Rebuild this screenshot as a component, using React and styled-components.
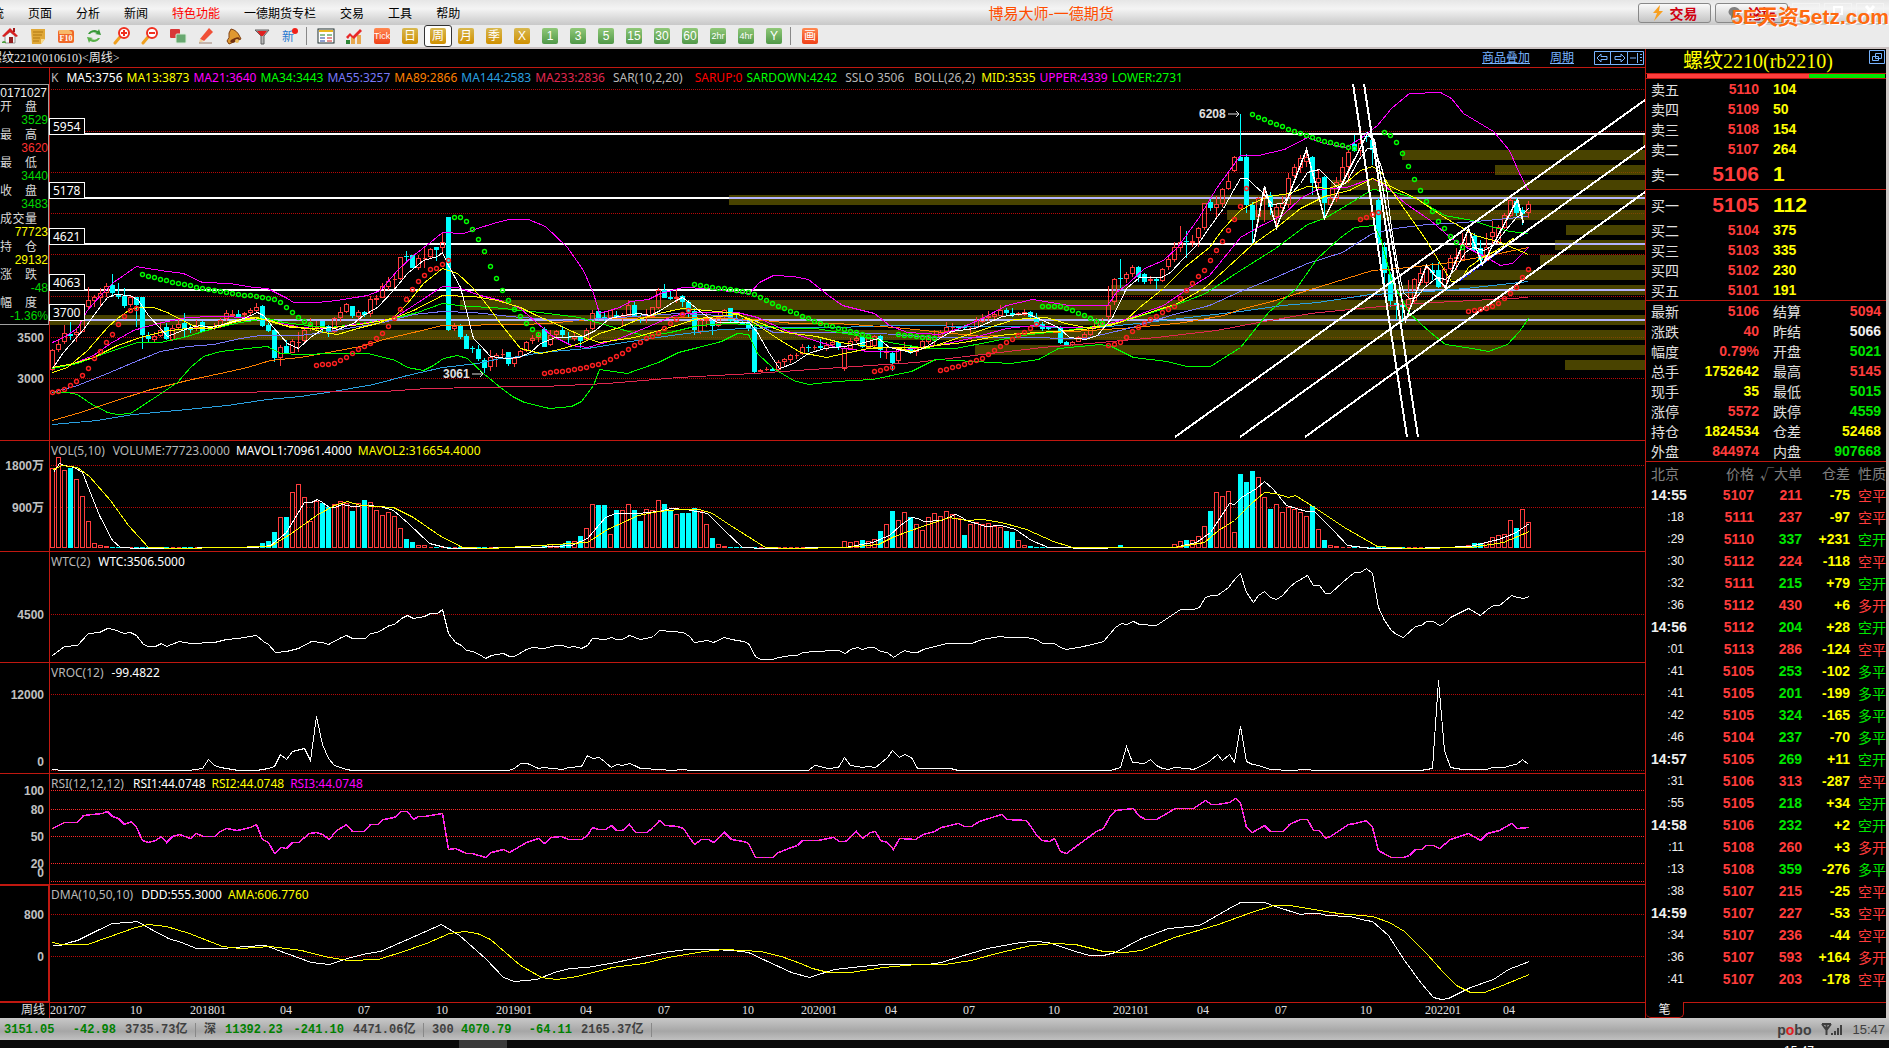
import React from 'react';
import styled, { createGlobalStyle, css } from 'styled-components';

const GlobalStyle = createGlobalStyle`
  * { box-sizing: border-box; }
  body {
    margin: 0;
    background: #000;
    font-family: "Liberation Sans", "Noto Sans CJK SC", sans-serif;
    font-size: 12px;
    overflow: hidden;
  }
  button, table { font: inherit; }
`;

const RED = '#ff3c3c';
const GREEN = '#00e600';
const YELLOW = '#ffff00';
const WHITE = '#f0f0f0';
const LINE = '#c01810';

/* ---------- data ---------- */

const menus = ['系统', '页面', '分析', '新闻', '特色功能', '一德期货专栏', '交易', '工具', '帮助'];

// one entry per week: colour, high, body top, body bottom, low
const candles = `
r349,350,370,371 r340,344,350,352 r325,333,342,344 c322,334,336,340 r328,332,335,342 r310,314,332,332
r287,300,307,310 r295,297,301,307 r288,293,298,307 r283,286,293,297 c274,285,293,297 c283,295,297,299
c288,296,306,308 r295,297,305,307 c297,297,305,327 c297,297,335,349 c332,336,339,342 r332,336,340,343
r322,330,336,337 c323,327,339,340 r325,328,340,341 r320,324,328,330 c313,323,329,337 c325,328,330,333
r320,327,329,331 c321,322,332,332 r326,327,328,330 r323,326,327,330 r318,320,327,328 r310,313,319,321
r310,314,316,317 c310,314,317,318 r312,313,315,317 r308,310,313,315 r303,307,311,313 c305,306,326,327
c323,325,331,332 c328,330,358,362 r345,347,358,366 c340,346,353,354 r339,341,353,353 r332,342,343,352
r328,330,341,342 r318,324,329,331 r321,327,328,331 c321,321,327,332 c325,326,332,337 r317,318,332,333
r307,312,318,322 r303,304,312,313 c306,306,316,318 r310,312,317,321 c311,312,315,317 r296,299,314,317
r295,298,300,305 r283,286,298,298 r277,281,287,290 r273,279,280,289 r257,257,279,280 c251,256,257,263
c255,255,268,268 r255,258,268,270 r248,258,259,268 r248,249,257,258 c247,247,250,261 r232,242,248,252
c217,217,330,331 r323,326,329,331 c324,325,337,339 c334,336,349,349 c346,348,349,353 c345,349,359,361
c358,360,368,373 r350,357,367,371 r353,355,358,367 r349,354,355,359 c352,352,364,366 r357,358,364,367
r350,351,357,358 r341,342,351,352 r335,338,341,344 r333,335,338,342 c327,329,347,347 r330,335,345,346
r330,331,335,337 c327,330,335,337 c332,337,338,343 r333,336,339,341 c336,336,341,348 r328,330,340,340
r310,313,329,330 c308,311,318,320 c312,317,318,321 r310,310,318,319 c311,315,317,319 r313,316,317,326
r300,305,316,317 c302,305,317,317 c315,317,318,323 r309,316,317,323 r307,307,317,318 r288,290,308,309
c284,290,298,298 c291,297,299,300 r290,297,299,303 c295,296,302,307 c300,302,312,318 c308,311,330,335
r319,320,332,334 r313,319,321,327 c318,321,326,335 r313,317,326,327 r309,310,317,318 c308,308,321,323
c312,321,323,324 c318,322,325,325 c318,323,328,331 c325,327,372,373 r369,370,372,372 r367,369,370,371
c367,369,371,371 r360,362,370,372 r358,359,362,367 r354,355,360,363 r353,355,356,359 r344,347,354,355
c345,347,348,352 r345,347,348,350 c339,346,348,350 r342,345,349,351 r340,342,345,347 c341,342,348,350
r346,348,369,371 r338,341,349,350 r336,338,341,343 c336,337,347,348 r337,338,348,348 r335,336,346,347
c335,336,350,358 r347,351,353,359 c352,353,363,371 r347,348,361,363 r342,347,348,350 c345,347,353,354
r347,348,352,356 r339,341,348,349 r335,339,342,344 r330,337,340,345 r330,332,337,338 r322,327,332,333
r323,327,328,333 c326,327,328,330 c325,326,328,330 r326,328,329,335 r317,320,328,328 r314,318,322,323
r311,316,318,321 r313,314,317,320 r305,310,316,316 c308,310,313,315 c308,313,315,317 r312,313,315,316
r309,312,315,316 c311,312,317,319 c313,317,325,326 c322,324,329,331 c326,327,329,330 r325,326,327,328
c326,327,343,344 c341,342,345,345 r341,342,345,346 r336,337,342,342 r332,334,338,339 r327,328,335,336
r318,323,328,328 r318,323,325,330 r286,305,317,320 r278,279,302,305 c259,278,279,288 r272,274,279,283
r265,267,274,277 c266,267,277,282 c273,274,282,284 r276,279,281,284 c277,279,281,289 r268,269,281,282
r255,259,267,270 r242,247,260,262 r226,242,248,252 c231,241,242,258 r235,241,243,247 r227,228,238,247
r203,203,228,230 c198,202,208,211 r196,204,208,217 r188,189,204,207 r173,181,189,190 r156,157,171,172
c114,157,161,161 c154,157,205,213 c202,205,220,243 r197,198,217,223 r187,197,198,222 c192,195,207,215
r203,207,217,225 r196,203,208,212 r173,178,205,208 r164,167,176,178 r155,158,168,173 r149,157,162,167
c156,157,183,195 r170,178,183,189 c176,177,203,219 r188,198,205,208 r177,182,199,202 r157,167,182,185
r149,152,167,183 c135,144,151,152 r133,143,151,156 c132,136,137,142 c138,140,150,165 c198,200,243,247
c242,247,273,283 c272,274,301,307 c297,303,305,320 c303,305,307,322 r280,299,308,310 r278,279,301,303
r268,273,283,285 r265,268,283,285 c263,270,273,280 c262,270,287,288 r267,269,287,288 r255,258,269,270
r248,257,259,270 r233,243,260,260 r228,232,247,247 c233,236,250,252 c240,248,260,264 r233,247,261,261
r221,232,237,247 r225,227,243,244 r213,215,228,229 r198,200,216,217 c198,201,213,216 c207,210,214,225
r201,204,213,218`.trim().split(/\s+/).map((s) => ({ up: s[0] === 'r', v: s.slice(1).split(',').map(Number) }));

// busy stretches of the volume chart, the weeks between them are nearly flat
const volumeRuns = [
  [0, 'r468 r457 r470 c468 r479 r496 r521 r543 r545 r546'],
  [35, 'c543 c541 c532 r517 c517 r492 r484 r497 r521 r501 c503 c507 r504 r501 r503 c511 r503 c500 r502 r510 r515 r512 r516 r528 c539 c542 r545 r545'],
  [82, 'c545 r544 r546 c544 c541 r541 c536 r528 r504 c505 c505 r534 c510 r510 r504 c510 c521 r509 r510 r500 c504 c511 r514 c513 c513 c508 r511 r524 c538 r544 r546'],
  [132, 'r541 r542 r541 c540 r541 r539 c531 r524 c511 r520 r512 c517 r524 r530 r517 r513 r516 r511 r514 r518 c535 r524 r522 r524 r523 r526 r527 c531 c532 r540 r545 c546'],
  [178, 'c545'],
  [187, 'r544 r541 c540 r540 r536 r526 c511 r492 r496 r491 r532 c474 c482 c471 r477 r497 c509 r504 r512 r507 r509 r512 r516 c506 r529 c540 r545 r546'],
  [236, 'r545 c543 c543 r542 r537 r535 r534 r520 c528 r509 r522'],
];

const volumes = candles.map((c) => ({ up: c.up, top: 547 }));
volumeRuns.forEach(([start, run]) => run.split(' ').forEach((s, i) => {
  volumes[start + i] = { up: s[0] === 'r', top: Number(s.slice(1)) };
}));

const priceLines = [
  ['#2aa0e0', '52,424 97,420 133,414 187,409 227,405 267,399 300,396 333,391 373,384 407,375 442,367 477,363 500,358 520,356 540,352 587,348 630,341 678,334 721,329 777,327 836,327 895,325 994,326 1100,327 1146,322 1188,317 1240,311 1282,305 1317,302 1370,294 1416,292 1465,288 1528,281'],
  ['#e02850', '52,392 83,392 213,392 300,391 383,391 427,388 480,387 520,386 543,386 607,383 678,377 753,373 840,367 915,362 982,354 1042,347 1100,342 1156,337 1216,330 1258,322 1310,313 1370,307 1416,303 1528,297'],
  ['#ff8000', '52,420 80,412 113,401 147,390 187,380 220,373 247,367 270,360 300,357 333,351 360,346 387,338 413,332 442,325 520,324 547,323 599,318 678,317 753,319 793,323 836,323 895,327 943,332 982,336 1026,333 1073,331 1135,327 1184,322 1223,315 1240,309 1275,300 1307,290 1346,278 1372,270 1409,267 1451,262 1489,255 1528,247'],
  ['#7878f8', '52,392 77,385 107,373 133,362 160,351 187,346 213,344 240,338 260,335 300,335 323,332 353,327 383,322 413,314 442,311 473,312 520,317 571,320 619,317 678,313 721,315 753,322 773,332 836,332 880,333 935,337 1014,337 1085,338 1132,327 1170,315 1209,305 1240,291 1275,277 1307,263 1342,252 1372,233 1395,228 1426,224 1451,223 1486,220 1528,216'],
  ['#00ff00', '52,368 77,363 107,352 137,342 160,342 183,337 213,328 240,322 267,318 283,322 307,325 330,327 360,323 393,318 417,312 442,303 467,306 493,307 540,312 579,317 607,325 646,336 670,332 698,325 729,323 761,325 785,328 816,328 856,335 895,343 927,348 955,348 986,342 1022,335 1065,330 1114,323 1142,315 1174,305 1205,293 1240,270 1275,248 1307,224 1324,218 1346,205 1372,189 1391,191 1416,198 1444,215 1472,220 1493,227 1510,231 1528,233'],
  ['#ff00ff', '52,367 73,363 93,355 110,343 133,330 150,325 167,321 187,317 213,316 253,317 277,322 300,327 317,328 333,327 363,323 393,318 410,307 442,286 457,287 480,295 500,300 520,308 551,335 571,345 587,347 619,338 646,327 674,315 698,312 737,312 757,317 785,330 808,338 836,347 868,351 895,351 919,347 947,343 974,337 1006,328 1034,325 1065,327 1093,327 1128,318 1163,305 1188,288 1209,275 1223,258 1240,237 1261,225 1282,215 1300,198 1317,189 1346,187 1372,178 1384,185 1405,203 1430,220 1451,238 1468,248 1486,257 1500,265 1512,263 1528,247'],
  ['#ffff00', '52,372 67,367 87,350 107,327 117,318 128,310 137,307 153,307 167,312 190,324 200,327 220,325 233,320 253,317 273,321 290,327 310,328 323,332 337,334 357,328 377,323 393,317 407,303 423,283 442,268 457,273 472,287 487,305 500,323 520,348 540,353 559,349 583,342 599,333 619,327 638,319 658,313 682,308 706,310 737,313 753,322 777,338 800,352 826,357 844,353 868,348 895,347 911,351 935,345 959,337 986,328 1014,319 1046,317 1065,323 1085,327 1110,325 1125,320 1139,307 1163,288 1184,267 1209,247 1223,228 1240,210 1254,202 1268,196 1289,193 1307,186 1328,188 1346,182 1360,170 1372,166 1381,172 1391,190 1405,210 1426,240 1444,270 1451,281 1460,280 1468,267 1482,257 1496,250 1514,237'],
  ['#ffff00', '52,367 73,363 93,357 117,345 140,337 163,331 187,328 213,328 233,322 257,317 283,325 307,328 333,327 360,324 393,318 413,310 442,295 473,296 497,300 520,307 536,315 559,325 587,338 599,342 634,337 666,328 698,318 737,314 761,323 785,332 816,336 840,342 876,347 919,347 963,342 1006,334 1054,331 1093,328 1118,322 1146,313 1177,303 1205,287 1226,268 1251,245 1275,228 1300,208 1324,196 1349,190 1372,178 1388,185 1416,198 1444,217 1475,235 1500,242 1528,254'],
  ['#ff00ff', '52,342 63,337 77,328 87,310 100,295 113,282 136,266 147,268 167,271 183,273 202,282 230,283 253,287 267,288 287,298 293,302 317,302 337,300 367,295 380,290 397,270 413,255 430,242 442,232 463,233 477,228 493,223 508,219 528,219 545,226 567,247 583,270 593,293 599,313 619,307 630,301 648,299 660,293 682,287 706,288 729,291 749,293 759,282 773,275 793,276 808,279 828,295 842,305 874,313 889,325 907,332 939,334 959,328 982,318 1006,305 1032,299 1069,305 1107,305 1116,292 1128,283 1144,268 1163,260 1177,247 1198,218 1216,188 1240,155 1258,155 1284,149 1307,137 1324,143 1346,147 1360,138 1377,125 1391,108 1409,93 1440,92 1451,98 1463,113 1493,131 1509,150 1519,173 1528,190'],
  ['#00ff00', '52,392 67,392 77,394 90,403 107,412 117,414 130,413 153,398 177,382 190,367 203,356 220,351 247,348 267,346 280,353 300,354 333,353 367,353 380,356 395,360 407,367 423,370 433,365 443,358 457,355 467,358 483,373 500,387 512,396 524,402 549,408 571,406 581,401 593,385 599,369 627,373 638,369 658,362 678,352 698,347 721,341 737,333 748,334 757,353 773,368 793,380 808,384 836,381 872,379 911,371 935,359 974,361 1010,363 1038,359 1058,348 1100,344 1111,346 1133,357 1167,361 1186,366 1210,366 1240,347 1268,312 1296,288 1317,258 1339,238 1354,227 1374,225 1381,240 1391,280 1409,313 1430,332 1445,344 1472,348 1488,351 1507,344 1519,331 1528,318'],
  ['#ffffff', '52,368 63,352 83,329 97,310 107,297 115,294 130,295 138,300 148,315 160,328 167,336 177,332 190,327 200,325 210,327 227,323 243,318 257,312 263,315 273,327 287,343 298,348 310,337 323,328 330,327 337,329 353,323 363,315 377,307 393,290 407,273 423,260 437,256 442,252 448,265 460,287 473,338 480,345 490,356 507,358 518,357 530,352 540,343 555,337 583,336 595,330 609,318 623,315 638,313 650,315 660,310 674,301 682,297 690,303 702,313 717,322 749,322 757,332 769,353 779,368 793,363 808,353 824,348 844,346 864,342 878,338 889,347 911,352 925,347 939,338 951,331 974,328 986,323 1002,316 1026,313 1038,318 1058,327 1069,337 1085,339 1097,335 1112,317 1126,288 1139,277 1161,277 1170,272 1184,257 1198,243 1209,227 1223,208 1233,190 1240,178 1247,178 1254,185 1263,193 1272,204 1282,203 1291,193 1300,183 1307,172 1319,169 1328,178 1337,187 1346,182 1358,160 1367,148 1374,148 1381,167 1386,187 1391,227 1398,270 1403,292 1409,298 1416,297 1424,287 1437,277 1445,279 1454,270 1465,252 1472,247 1484,250 1495,243 1505,230 1516,217 1523,213 1528,208'],
];

const sarRuns = [
  ['#ff2020', '52,392 64,389 76,381 82,375 88,368 94,358 100,351 106,342 112,334 118,324 124,316 130,310 136,308'],
  ['#00ff00', '142,274 160,279 184,284 208,289 232,293 256,296 274,299 280,302 286,307 298,317 310,324'],
  ['#ff2020', '316,365 334,363 346,357 358,349 370,343 382,333 388,326 394,318 400,309 406,299 412,289 418,281 424,275 430,269 436,268 442,264 448,260'],
  ['#00ff00', '454,217 460,217 466,221 472,229 478,239 484,251 490,266 496,278 502,290 508,300 514,309 520,316 526,323 532,329 538,334'],
  ['#ff2020', '544,373 575,369 599,364 623,352 646,338 658,333 670,323 682,314 688,310'],
  ['#00ff00', '694,284 721,288 748,292 755,294 779,306 796,313 816,322 844,329 869,336'],
  ['#ff2020', '874,371 892,367'],
  ['#00ff00', '898,334 934,338'],
  ['#ff2020', '940,370 964,364 982,358 994,350 1006,342 1018,335 1030,328 1036,324'],
  ['#00ff00', '1042,306 1060,306 1072,310 1084,315 1096,321 1102,323'],
  ['#ff2020', '1108,345 1120,342 1132,331 1144,323 1162,312 1174,306 1180,298 1186,290 1198,276 1204,270 1210,260 1216,250 1222,241 1228,230 1234,219 1240,206 1246,188'],
  ['#00ff00', '1252,114 1276,124 1300,133 1324,141 1354,148'],
  ['#ff2020', '1360,219 1378,212'],
  ['#00ff00', '1384,132 1390,135 1396,142 1402,153 1408,166 1414,179 1420,190 1426,201 1432,211 1438,221 1444,228 1450,236 1456,242 1462,247'],
  ['#ff2020', '1468,311 1486,308 1498,303 1510,293 1516,287 1522,277 1528,269'],
];

// one dot per week along the run
const sarDots = sarRuns.flatMap(([color, run]) => {
  const pts = run.split(' ').map((p) => p.split(',').map(Number));
  const dots = [];
  for (let x = pts[0][0], k = 0; x <= pts[pts.length - 1][0]; x += 6) {
    while (k < pts.length - 2 && x > pts[k + 1][0]) k += 1;
    const [x0, y0] = pts[k];
    const [x1, y1] = pts[k + 1];
    dots.push({ color, x, y: Math.round(y0 + ((y1 - y0) * (x - x0)) / (x1 - x0)) });
  }
  return dots;
});

const profile = [
  [1643, 135], [1402, 150], [1495, 165], [1331, 180], [729, 195], [1227, 210], [1566, 225], [1555, 240],
  [1540, 255], [1451, 270], [1111, 285], [460, 300], [50, 315], [173, 330], [975, 345], [1565, 360],
];

// level, line y, x from which the line runs over the profile
const levels = [['5954', 133, 1645], ['5178', 197, 729], ['4621', 243, 1555], ['4063', 289, 1111], ['3700', 319, 50]];

const wtc = '52,655 64,646 77,645 88,633 99,632 107,628 113,629 124,633 130,632 136,635 143,644 148,646 155,646 161,643 166,646 179,641 190,643 214,642 226,639 237,638 256,635 263,641 268,644 275,652 286,651 298,648 311,641 322,642 328,644 341,637 346,635 352,638 365,638 370,633 377,632 389,625 394,624 401,618 407,615 413,618 424,616 430,613 437,613 442,609 448,633 455,642 461,645 466,650 472,651 479,654 485,658 491,655 503,653 509,656 514,656 526,649 532,647 543,648 556,645 562,645 568,647 574,646 581,648 587,645 592,638 605,639 611,637 616,639 622,639 629,635 640,639 646,638 653,636 659,630 683,632 689,636 694,642 707,640 713,642 724,637 731,639 743,641 748,643 755,656 760,659 772,659 778,657 791,655 797,655 802,652 815,651 834,650 838,650 845,653 850,649 857,647 862,649 868,647 874,647 880,651 887,652 893,657 899,653 904,650 911,652 917,652 923,649 946,643 971,643 982,639 1000,636 1007,637 1026,637 1036,639 1042,643 1054,643 1060,647 1066,649 1078,647 1092,644 1103,641 1115,627 1121,623 1126,624 1133,621 1139,624 1156,625 1174,613 1180,609 1193,609 1199,607 1205,597 1211,595 1217,595 1228,587 1235,578 1240,573 1246,592 1253,602 1258,595 1264,591 1270,597 1276,599 1282,595 1289,587 1295,582 1307,575 1313,585 1319,585 1325,593 1330,593 1342,582 1354,572 1360,572 1366,568 1372,573 1378,607 1384,620 1391,630 1396,634 1403,637 1415,626 1421,625 1426,621 1433,621 1439,625 1444,623 1450,617 1468,608 1480,615 1487,609 1493,605 1499,605 1504,601 1511,595 1517,597 1523,598 1529,596';
const vroc = '52,769 62,770 188,770 202,768 208,759 214,765 220,767 238,770 256,770 268,768 274,766 280,754 286,759 292,751 304,748 310,760 316,716 322,744 328,758 334,765 340,767 346,769 352,770 508,770 514,768 520,763 527,763 538,768 543,767 562,769 568,767 581,766 587,755 592,758 599,757 605,762 611,767 616,764 622,765 629,763 634,765 640,768 660,769 670,770 683,769 690,770 808,770 814,765 820,766 827,768 838,767 844,757 850,765 862,767 868,766 875,767 880,763 887,757 892,750 899,757 904,754 911,757 917,768 950,768 958,770 1110,770 1120,767 1126,746 1132,762 1144,763 1150,759 1156,765 1162,768 1168,769 1174,767 1187,768 1193,769 1204,764 1210,760 1217,754 1222,760 1229,754 1234,762 1240,726 1246,761 1252,764 1258,765 1270,769 1290,770 1306,769 1315,770 1420,770 1432,768 1438,680 1444,750 1450,767 1462,769 1486,769 1492,767 1504,767 1510,765 1516,764 1522,759 1528,764';
const rsi = '52,828 64,822 77,822 83,815 92,814 102,813 107,811 112,816 118,818 124,824 131,821 136,827 142,840 148,842 155,840 161,836 166,842 172,836 179,834 190,838 196,833 203,836 214,836 220,831 226,828 237,830 250,827 256,824 262,839 268,842 274,853 281,847 286,848 292,842 298,842 309,833 316,832 322,834 329,839 335,831 346,824 352,831 364,831 370,824 377,824 383,819 394,817 401,811 407,811 413,819 418,816 424,816 442,813 448,849 455,848 466,853 472,853 485,857 491,852 503,849 509,852 526,842 538,838 544,843 551,837 561,836 568,839 581,839 587,835 592,827 598,829 605,829 611,825 616,830 622,830 629,824 635,832 646,832 653,827 659,820 665,825 677,826 683,828 689,837 694,844 701,839 708,839 713,842 724,832 731,839 743,841 748,843 755,857 772,857 778,852 791,847 797,845 802,840 817,840 833,837 839,841 845,841 856,831 862,838 870,832 875,831 880,840 887,842 893,849 899,838 915,839 923,834 934,831 941,827 958,823 964,826 971,826 979,821 1001,814 1007,819 1026,820 1031,827 1037,836 1042,840 1049,841 1054,838 1060,851 1066,853 1096,831 1103,828 1109,817 1115,810 1133,808 1138,815 1145,819 1156,819 1168,812 1175,808 1193,808 1205,800 1211,804 1217,804 1229,802 1235,798 1240,802 1246,827 1252,832 1264,825 1270,831 1283,831 1289,824 1300,819 1307,819 1313,830 1319,830 1325,838 1330,836 1348,824 1355,823 1366,820 1372,827 1378,850 1385,854 1391,857 1403,857 1409,855 1415,849 1421,849 1426,845 1433,845 1439,848 1450,839 1468,833 1480,840 1487,833 1499,830 1511,823 1517,828 1529,827';
const dmaWhite = '52,945 60,945 69,942 77,940 87,935 97,930 112,923 128,922 137,921 151,929 168,938 181,942 196,948 222,948 245,946 265,945 286,953 311,962 329,964 347,958 362,954 380,951 398,943 423,932 441,924 459,935 485,958 503,977 514,981 536,979 554,972 569,968 587,967 615,962 643,956 663,952 686,949 712,949 732,950 748,952 765,960 791,972 809,977 834,969 861,966 883,964 927,964 941,962 960,956 987,948 1020,942 1034,941 1048,942 1075,951 1089,955 1103,955 1115,952 1141,938 1168,928 1199,925 1229,908 1240,902 1264,902 1275,906 1300,914 1307,913 1319,913 1326,915 1349,916 1366,920 1372,921 1388,935 1404,960 1421,983 1433,997 1441,999 1448,998 1470,987 1493,979 1508,969 1529,961';
const dmaYellow = '52,942 61,944 87,944 107,937 135,927 148,924 166,926 189,933 222,946 240,948 270,946 301,950 324,956 347,960 378,959 403,951 426,943 449,933 464,931 477,933 490,939 520,965 541,977 556,979 577,976 612,967 643,963 668,957 704,951 724,949 760,951 781,956 800,963 812,968 828,972 850,972 883,967 916,964 944,964 971,960 996,953 1031,945 1053,943 1075,944 1103,951 1125,952 1141,950 1174,937 1218,924 1251,912 1273,905 1289,905 1338,913 1372,916 1389,922 1404,931 1426,953 1443,972 1456,985 1470,992 1484,992 1497,987 1529,974';
const mavol1 = '53,472 59,463 64,465 74,467 82,472 89,490 99,515 112,540 120,547 138,548 255,547 270,545 286,532 304,502 311,502 317,499 322,502 329,507 334,507 342,504 352,506 367,505 380,506 393,510 408,523 429,543 449,548 536,547 571,545 587,538 605,517 615,513 638,513 658,511 671,508 686,509 707,513 724,530 742,547 765,548 845,547 872,542 889,535 900,525 911,517 917,518 924,521 941,520 955,514 960,516 966,520 985,526 1001,525 1015,529 1031,540 1048,547 1097,548 1119,547 1174,547 1196,542 1210,532 1229,503 1234,504 1241,497 1256,488 1264,481 1273,489 1286,505 1306,511 1314,511 1333,530 1347,545 1371,548 1410,548 1470,546 1498,539 1514,533 1529,523';
const mavol2 = '53,469 62,465 77,467 89,476 110,500 128,525 148,547 179,548 270,546 291,533 316,515 334,505 347,501 360,505 393,507 413,517 439,535 462,547 490,548 587,542 607,529 638,515 658,511 679,509 699,509 712,513 730,525 765,547 790,548 845,547 878,544 894,536 922,526 949,517 966,520 982,519 1001,522 1026,529 1053,541 1072,547 1174,547 1204,542 1218,530 1234,520 1251,503 1264,492 1275,493 1288,497 1295,495 1314,507 1344,527 1377,546 1410,548 1470,547 1503,542 1529,531';

const G = '#b8b8b8';
const mainLegend = [
  [G, 'K', 8], ['#fff', 'MA5:3756'], [YELLOW, 'MA13:3873'], ['#ff00ff', 'MA21:3640'], ['#00ff00', 'MA34:3443'],
  ['#7878f8', 'MA55:3257'], ['#ff8000', 'MA89:2866'], ['#2aa0e0', 'MA144:2583'], ['#e02850', 'MA233:2836', 8],
  [G, 'SAR(10,2,20)', 12], ['#ff0000', 'SARUP:0'], ['#00ff00', 'SARDOWN:4242', 8], [G, 'SSLO 3506', 10],
  [G, 'BOLL(26,2)', 6], [YELLOW, 'MID:3535'], ['#ff00ff', 'UPPER:4339'], ['#00ff00', 'LOWER:2731'],
];

const dateMarks = [
  ['201707', 80], ['10', 60], ['201801', 90], ['04', 78], ['07', 78], ['10', 60], ['201901', 84], ['04', 78],
  ['07', 84], ['10', 59], ['202001', 84], ['04', 78], ['07', 85], ['10', 65], ['202101', 84], ['04', 78],
  ['07', 85], ['10', 65], ['202201', 78], ['04', 142],
];

const weekInfo = [
  ['开盘', '3529', '#00d800'], ['最高', '3620', '#ff3030'], ['最低', '3440', '#00d800'], ['收盘', '3483', '#00d800'],
  ['成交量', '77723', YELLOW], ['持仓', '29132', YELLOW], ['涨跌', '-48', '#00d800'], ['幅度', '-1.36%', '#00d800'],
];

const sells = [['卖五', '5110', '104'], ['卖四', '5109', '50'], ['卖三', '5108', '154'], ['卖二', '5107', '264'], ['卖一', '5106', '1']];
const buys = [['买一', '5105', '112'], ['买二', '5104', '375'], ['买三', '5103', '335'], ['买四', '5102', '230'], ['买五', '5101', '191']];
const stats = [
  ['最新', '5106', RED, '结算', '5094', RED],
  ['涨跌', '40', RED, '昨结', '5066', WHITE],
  ['幅度', '0.79%', RED, '开盘', '5021', GREEN],
  ['总手', '1752642', YELLOW, '最高', '5145', RED],
  ['现手', '35', YELLOW, '最低', '5015', GREEN],
  ['涨停', '5572', RED, '跌停', '4559', GREEN],
  ['持仓', '1824534', YELLOW, '仓差', '52468', YELLOW],
  ['外盘', '844974', RED, '内盘', '907668', GREEN],
];

const trades = `14:55 5107 211 -75 空平 r r
:18 5111 237 -97 空平 r r
:29 5110 337 +231 空开 g g
:30 5112 224 -118 空平 r r
:32 5111 215 +79 空开 g g
:36 5112 430 +6 多开 r r
14:56 5112 204 +28 空开 g g
:01 5113 286 -124 空平 r r
:41 5105 253 -102 多平 g g
:41 5105 201 -199 多平 g g
:42 5105 324 -165 多平 g g
:46 5104 237 -70 多平 g g
14:57 5105 269 +11 空开 g g
:31 5106 313 -287 空平 r r
:55 5105 218 +34 空开 g g
14:58 5106 232 +2 空开 g g
:11 5108 260 +3 多开 r r
:13 5108 359 -276 多平 g g
:38 5107 215 -25 空平 r r
14:59 5107 227 -53 空平 r r
:34 5107 236 -44 空平 r r
:36 5107 593 +164 多开 r r
:41 5107 203 -178 空平 r r`.split('\n').map((l) => l.split(' '));

/* ---------- styled parts ---------- */

const Page = styled.div`
  display: flex;
  flex-direction: column;
  height: 100vh;
  min-height: 1040px;
  overflow: hidden;
  background: #000;
`;

const TitleBar = styled.header`
  display: flex;
  align-items: center;
  flex: none;
  height: 25px;
  background: linear-gradient(#e6e6e6, #f4f4f4 35%, #c8c8c8);
`;

const MenuNav = styled.nav`
  display: flex;
  gap: 24px;
  margin-left: -20px;
`;

const MenuItem = styled.button`
  padding: 0;
  border: 0;
  background: none;
  font: 12px/20px "Noto Sans CJK SC", sans-serif;
  color: ${(p) => (p.$hot ? '#ff0000' : '#000')};
  white-space: nowrap;
`;

const AppTitle = styled.h1`
  flex: 1;
  margin: 0;
  padding-left: 4px;
  text-align: center;
  font: 15px/24px "Noto Sans CJK SC", sans-serif;
  color: #ff4d00;
`;

const TitleActions = styled.div`
  position: relative;
  display: flex;
  gap: 4px;
  width: 251px;
`;

const ActionButton = styled.button`
  display: flex;
  align-items: center;
  justify-content: center;
  gap: 6px;
  width: 73px;
  height: 20px;
  padding: 0;
  border: 1px solid #888;
  border-radius: 3px;
  background: linear-gradient(#fafafa, #c4c4c4);
  color: #d00010;
  font: bold 14px/18px "Noto Sans CJK SC", sans-serif;
`;

const WindowButton = styled.button`
  width: 28px;
  height: 20px;
  padding: 0;
  border: 1px solid #f4f4f4;
  background: none;
  color: #fff;
`;

const Watermark = styled.span`
  position: absolute;
  right: 0;
  top: 0;
  font: bold 21px/28px "Liberation Sans", "Noto Sans CJK SC", sans-serif;
  color: #ff6a10;
  text-shadow: 1px 1px 0 #fff;
  white-space: nowrap;
`;

const Toolbar = styled.div`
  display: flex;
  align-items: center;
  flex: none;
  height: 24px;
  padding-right: 4px;
  border-bottom: 2px solid #c9c0c0;
  background: #ebebeb;
`;

const ToolButton = styled.button`
  display: flex;
  align-items: center;
  justify-content: center;
  width: 28px;
  height: 22px;
  padding: 0;
  border: 1px solid ${(p) => (p.$on ? '#333' : 'transparent')};
  border-radius: 3px;
  background: ${(p) => (p.$on ? '#fff' : 'none')};
  &:first-child { margin-left: -4px; }
`;

const tones = {
  gold: 'linear-gradient(#d8b850, #d09000)',
  green: 'linear-gradient(#90c878, #509848)',
  red: 'linear-gradient(#ff8850, #f04018)',
};

const Chip = styled.span`
  width: 16px;
  height: 16px;
  border-radius: 2px;
  background: ${(p) => tones[p.$tone]};
  color: #fff;
  font: 12px/16px "Liberation Sans", "Noto Sans CJK SC", sans-serif;
  text-align: center;
  overflow: hidden;
  ${(p) => p.$small && css`font-size: 9px;`}
`;

const ToolSeparator = styled.i`
  width: 1px;
  height: 18px;
  margin: 0 5px 0 2px;
  background: #888;
`;

const Workspace = styled.main`
  display: flex;
  flex: 1;
  min-height: 0;
  border-right: 3px solid #cfc9c7;
`;

const ChartArea = styled.section`
  display: flex;
  flex-direction: column;
  flex: 1;
  min-width: 0;
  border-right: 1px solid ${LINE};
`;

const ChartHead = styled.div`
  display: flex;
  align-items: center;
  flex: none;
  height: 19px;
  border-bottom: 1px solid ${LINE};
  color: #e8e8e8;
  font: 12px/18px "Liberation Serif", "Noto Sans CJK SC", serif;
`;

const ChartName = styled.h2`
  flex: 1;
  margin: 0 0 0 -10px;
  font: inherit;
`;

const HeadLink = styled.a`
  margin-right: 20px;
  color: #78b4ff;
`;

const Panes = styled.div`
  display: grid;
  grid-template-rows: minmax(0, 373fr) repeat(4, minmax(0, 111fr)) minmax(0, 118fr);
  flex: 1;
  min-height: 0;
`;

const PaneRow = styled.div`
  display: grid;
  grid-template-columns: 49px minmax(0, 1fr);
  min-height: 0;
  border-bottom: 1px solid ${LINE};
`;

const AxisCell = styled.div`
  position: relative;
  ${(p) => p.$active && css`
    margin-left: -2px;
    outline: 2px solid ${LINE};
    outline-offset: -1px;
  `}
`;

const Tick = styled.span`
  position: absolute;
  right: 5px;
  margin-top: -8px;
  color: #c0c0c0;
  font: bold 12px/16px "Liberation Sans", "Noto Sans CJK SC", sans-serif;
  white-space: nowrap;
`;

const Plot = styled.div`
  position: relative;
  min-width: 0;
  min-height: 0;
  border-left: 1px solid ${LINE};
`;

const PlotSvg = styled.svg`
  display: block;
  width: 100%;
  height: 100%;
  shape-rendering: crispEdges;
`;

const Legend = styled.div`
  position: absolute;
  left: 1px;
  top: 0;
  display: flex;
  font: 12px/20px "Noto Sans", sans-serif;
  white-space: nowrap;
`;

const LegendItem = styled.span`
  margin-right: ${(p) => p.$gap || 4}px;
  color: ${(p) => p.$color};
`;

const LevelTag = styled.span`
  position: absolute;
  left: -1px;
  height: 17px;
  width: 36px;
  margin-top: -15px;
  padding-left: 3px;
  border: 1px solid #fff;
  background: #000;
  color: #fff;
  font: 12px/15px "Noto Sans", sans-serif;
`;

const Extreme = styled.span`
  position: absolute;
  display: flex;
  align-items: center;
  gap: 2px;
  margin-top: -8px;
  color: #e0e0e0;
  font: bold 12px/16px "Liberation Sans", sans-serif;
`;

const WeekBox = styled.dl`
  width: 49px;
  margin: 16px 0 0;
  border: 1px solid #a0a0a0;
  border-left: 0;
  text-align: right;
  font: 12px/14px "Liberation Sans", "Noto Sans CJK SC", sans-serif;
`;

const WeekDate = styled.div`
  display: flex;
  justify-content: flex-end;
  height: 15px;
  padding-right: 1px;
  color: #f0f0f0;
  line-height: 16px;
`;

const WeekLabel = styled.dt`
  display: flex;
  justify-content: space-between;
  width: 37px;
  height: 14px;
  color: #d8d8d8;
`;

const WeekValue = styled.dd`
  height: 14px;
  margin: 0;
  color: ${(p) => p.$color};
  line-height: 12px;
`;

const DateAxis = styled.div`
  display: grid;
  grid-template-columns: 49px minmax(0, 1fr);
  flex: none;
  height: 15px;
  color: #e0e0e0;
  font: 12px/15px "Liberation Serif", "Noto Sans CJK SC", serif;
`;

const PeriodName = styled.span`
  padding-right: 4px;
  text-align: right;
`;

const DateTrack = styled.div`
  display: flex;
  border-left: 1px solid ${LINE};
`;

const DateMark = styled.span`
  flex: ${(p) => p.$span} 0 0;
  min-width: 0;
`;

const QuotePanel = styled.aside`
  display: flex;
  flex-direction: column;
  flex: none;
  width: 240px;
`;

const QuoteHead = styled.div`
  position: relative;
  height: 25px;
  padding-right: 16px;
  border-bottom: 1px solid ${LINE};
  text-align: center;
`;

const QuoteTitle = styled.h2`
  margin: 0;
  color: ${YELLOW};
  font: 20px/24px "Liberation Serif", "Noto Sans CJK SC", serif;
`;

const RestoreButton = styled.button`
  position: absolute;
  right: 1px;
  top: 1px;
  width: 16px;
  height: 14px;
  padding: 0;
  border: 0;
  background: none;
  line-height: 0;
`;

const StrengthBar = styled.div`
  display: flex;
  height: 5px;
  padding: 0 1px;
  border-bottom: 1px solid ${LINE};
`;

const Strength = styled.i`
  flex: ${(p) => p.$part} 0 0;
  background: ${(p) => p.$color};
`;

const Book = styled.section`
  border-bottom: 1px solid ${LINE};
`;

const QuoteRow = styled.div`
  display: grid;
  grid-template-columns: 28px 1fr 14px 28px 1fr;
  align-items: center;
  height: ${(p) => (p.$big ? 30 : 20)}px;
  padding: 0 5px;
  font: bold 14px/20px "Liberation Sans", sans-serif;
`;

const QuoteLabel = styled.span`
  grid-column: ${(p) => p.$col || 1};
  color: #e0e0e0;
  font: 14px/20px "Noto Sans CJK SC", sans-serif;
`;

const Figure = styled.span`
  grid-column: ${(p) => p.$col};
  color: ${(p) => p.$color};
  text-align: ${(p) => (p.$left ? 'left' : 'right')};
  ${(p) => p.$big && css`font-size: 21px;`}
`;

const TradeTable = styled.table`
  width: 100%;
  table-layout: fixed;
  border-collapse: collapse;
  font: bold 14px/22px "Liberation Sans", sans-serif;
  text-align: right;
  th, td { height: 22px; padding: 0; white-space: nowrap; }
  th { color: #808080; font: 14px/22px "Noto Sans CJK SC", sans-serif; }
  th:first-child { padding-left: 5px; text-align: left; }
`;

const TimeCell = styled.td`
  text-align: ${(p) => (p.$minute ? 'left' : 'right')};
  color: ${WHITE};
  && { padding: ${(p) => (p.$minute ? '0 0 0 5px' : '0 6px 0 0')}; }
  ${(p) => !p.$minute && css`font: 12px/22px "Liberation Sans", sans-serif;`}
`;

const TradeCell = styled.td`
  color: ${(p) => p.$color};
`;

const KindCell = styled.td`
  color: ${(p) => p.$color};
  font: 14px/22px "Noto Sans CJK SC", sans-serif;
`;

const TabStrip = styled.div`
  display: flex;
  height: 16px;
  margin-top: auto;
`;

const Tab = styled.button`
  width: 38px;
  padding: 0 0 2px;
  border: 1px solid ${LINE};
  border-width: 0 1px 1px 0;
  border-radius: 0 0 5px 5px;
  background: none;
  color: ${WHITE};
  font: 12px/12px "Noto Sans CJK SC", sans-serif;
`;

const TabRest = styled.div`
  flex: 1;
  border-top: 1px solid ${LINE};
`;

const StatusBar = styled.footer`
  display: flex;
  align-items: center;
  flex: none;
  height: 22px;
  padding: 2px 4px 0;
  background: linear-gradient(#c8c8c8, #a6a6a6 60%, #c0c0c0);
  color: #404040;
  font: bold 12px/20px "Liberation Mono", "Noto Sans CJK SC", monospace;
  white-space: pre;
`;

const IndexValue = styled.span`
  width: ${(p) => p.$w}px;
  color: ${(p) => (p.$green ? '#008000' : '#404040')};
  text-align: ${(p) => (p.$right ? 'right' : 'left')};
  margin-right: 9px;
`;

const StatusSeparator = styled.i`
  width: 1px;
  height: 14px;
  margin-right: 8px;
  background: #888;
`;

const Brand = styled.span`
  margin-left: auto;
  margin-right: 10px;
  font: bold 14px/20px "Liberation Sans", sans-serif;
  b { color: #e02020; }
`;

const Clock = styled.time`
  margin-left: 10px;
  font: 13px/20px "Liberation Sans", sans-serif;
`;

const Taskbar = styled.div`
  display: flex;
  flex: none;
  height: 8px;
  overflow: hidden;
  background: #0a0a0a;
`;

const TaskItem = styled.i`
  width: 48px;
  margin-left: 459px;
  background: #3a3a3a;
`;

const TaskClock = styled.span`
  margin-left: auto;
  padding: 4px 75px 0 0;
  color: #fff;
  font: 12px/14px "Liberation Sans", sans-serif;
`;

/* ---------- icons ---------- */

const Icon = ({ children }) => <svg width="18" height="18" viewBox="0 0 18 18">{children}</svg>;

const icons = {
  home: (
    <Icon>
      <path d="M4 9v7h10V9L9 5z" fill="#f4f4f4" stroke="#999" />
      <path d="M1 9l8-8 8 8-2 1-6-5-6 5z" fill="#d82020" />
      <path d="M12 1h2v4h-2z" fill="#a01818" />
      <path d="M8 10h4v6H8z" fill="#902020" />
      <path d="M1 15q2-2 4 0v1H1z" fill="#50a040" />
    </Icon>
  ),
  note: (
    <Icon>
      <path d="M2 2h14v10l-4 5H3z" fill="#e0a838" />
      <path d="M16 12l-4 5v-5z" fill="#f8dc90" />
      <path d="M4 5h10M4 8h9M4 11h7M4 14h6" stroke="#b07810" />
    </Icon>
  ),
  f10: (
    <Icon>
      <rect x="1" y="3" width="16" height="13" rx="2" fill="#f06828" />
      <path d="M2 7V3h10l3 2v2z" fill="#f8b868" />
      <text x="9" y="14" fontSize="8" fontWeight="bold" fontFamily="Liberation Serif" textAnchor="middle" fill="#fff">F10</text>
    </Icon>
  ),
  refresh: (
    <Icon>
      <path d="M3 7q2-4 7-4l3 1 1-2 2 6-6-1 2-1q-5-2-7 1z" fill="#389838" />
      <path d="M15 11q-2 4-7 4l-3-1-1 2-2-6 6 1-2 1q5 2 7-1z" fill="#58b048" />
    </Icon>
  ),
  zoomIn: (
    <Icon>
      <path d="M2 16l5-6" stroke="#f0a020" strokeWidth="3" strokeLinecap="round" />
      <circle cx="11" cy="6" r="5" fill="#fff" stroke="#f03020" strokeWidth="2" />
      <path d="M8 6h6M11 3v6" stroke="#f03020" strokeWidth="2" />
    </Icon>
  ),
  zoomOut: (
    <Icon>
      <path d="M2 16l5-6" stroke="#f0a020" strokeWidth="3" strokeLinecap="round" />
      <circle cx="11" cy="6" r="5" fill="#fff" stroke="#f03020" strokeWidth="2" />
      <path d="M8 6h6" stroke="#f03020" strokeWidth="2" />
    </Icon>
  ),
  overlay: (
    <Icon>
      <rect x="1" y="2" width="10" height="9" rx="1" fill="#d83838" />
      <rect x="7" y="7" width="10" height="9" rx="1" fill="#68a870" stroke="#d8ecd8" />
    </Icon>
  ),
  pencil: (
    <Icon>
      <path d="M3 12L12 1l4 4-9 9z" fill="#f05038" />
      <path d="M3 12l4 2-5 2z" fill="#f0d0a0" />
      <path d="M2 16h13" stroke="#a08070" />
    </Icon>
  ),
  bell: (
    <Icon>
      <path d="M6 2q6 1 9 8l1 2-12 5-2-3q3-3 2-8z" fill="#e09830" stroke="#804010" />
      <ellipse cx="10" cy="13" rx="5" ry="2" transform="rotate(-22 10 13)" fill="#703010" />
      <circle cx="12" cy="14" r="2" fill="#f0c060" />
    </Icon>
  ),
  funnel: (
    <Icon>
      <path d="M2 3h14l-5 6v8H8V9z" fill="#b8b8b8" stroke="#606060" />
      <path d="M4 4h10l-4 5H8z" fill="#e02020" />
    </Icon>
  ),
  fresh: (
    <Icon>
      <text x="7" y="14" fontSize="12" fontFamily="Noto Sans CJK SC" textAnchor="middle" fill="#2878d0">新</text>
      <circle cx="14" cy="4" r="3" fill="#f02018" />
    </Icon>
  ),
  sheet: (
    <Icon>
      <rect x="1" y="2" width="16" height="14" fill="#fff" stroke="#203030" />
      <path d="M2 3h14v2H2z" fill="#e8b820" />
      <path d="M3 8h5M10 8h5" stroke="#208020" strokeWidth="1" />
      <path d="M3 11h5M3 14h5" stroke="#2040a0" />
      <path d="M10 11h5M10 14h5" stroke="#d02020" />
    </Icon>
  ),
  bars: (
    <Icon>
      <path d="M1 13h4v4H1z" fill="#308838" />
      <path d="M6 10h4v7H6zM12 8h4v9h-4z" fill="#e8a850" />
      <path d="M1 10l4-4 3 3 7-7 2 2-8 8-4-3-2 3z" fill="#e82828" />
    </Icon>
  ),
};

const leftTools = ['home', 'note', 'f10', 'refresh', 'zoomIn', 'zoomOut', 'overlay', 'pencil', 'bell', 'funnel', 'fresh'];
const chips = [
  ['Tick', 'red'], ['日', 'gold'], ['周', 'gold'], ['月', 'gold'], ['季', 'gold'], ['X', 'gold'],
  ['1', 'green'], ['3', 'green'], ['5', 'green'], ['15', 'green'], ['30', 'green'], ['60', 'green'],
  ['2hr', 'green'], ['4hr', 'green'], ['Y', 'green'],
];

/* ---------- components ---------- */

const Bars = () => volumes.map((b, i) => {
  const x = 50 + 6 * i;
  return b.up
    ? <path key={i} d={`M${x + 0.5} ${b.top + 0.5}h4V547.5h-4z`} fill="#000" stroke={RED} />
    : <rect key={i} x={x} y={b.top} width="5" height={548 - b.top} fill="#00ffff" />;
});

const Candles = () => candles.map(({ up, v: [hi, top, bottom, lo] }, i) => {
  const x = 50 + 6 * i;
  const h = Math.max(bottom - top, 1);
  if (!up) {
    return (
      <g key={i} fill="#00ffff">
        <rect x={x + 2} y={hi} width="1" height={lo - hi} />
        <rect x={x} y={top} width="5" height={h} />
      </g>
    );
  }
  return (
    <g key={i} fill={RED}>
      <rect x={x + 2} y={hi} width="1" height={top - hi} />
      <rect x={x + 2} y={bottom} width="1" height={lo - bottom} />
      <path d={`M${x + 0.5} ${top + 0.5}h4v${h - 1}h-4z`} fill="none" stroke={RED} />
    </g>
  );
});

function Pane({ top, height, grid, bright, ticks, legend, active, axis, overlay, children }) {
  const at = (y) => `${((y - top) / height) * 100}%`;
  return (
    <PaneRow>
      <AxisCell $active={active}>
        {axis}
        {ticks.map(([label, y]) => <Tick key={label} style={{ top: at(y) }}>{label}</Tick>)}
      </AxisCell>
      <Plot>
        <PlotSvg viewBox={`50 ${top} 1595 ${height}`} preserveAspectRatio="none">
          {grid.map((y) => (
            <path key={y} d={`M51 ${y + 0.5}H1645`} stroke={bright ? '#ff2828' : '#b80808'} strokeDasharray="1 1" />
          ))}
          {children}
        </PlotSvg>
        <Legend>
          {legend.map(([color, text, gap]) => <LegendItem key={text} $color={color} $gap={gap}>{text}</LegendItem>)}
        </Legend>
        {overlay && overlay(at)}
      </Plot>
    </PaneRow>
  );
}

// half a unit of shift centres the one pixel stroke on the pixel row
const Curve = ({ points, color, width = 1, dash }) => (
  <polyline
    points={points}
    transform="translate(0.5 0.5)"
    fill="none"
    stroke={color}
    strokeWidth={width}
    strokeDasharray={dash}
  />
);

const Arrow = () => (
  <svg width="12" height="8" viewBox="0 0 12 8"><path d="M0 4h11M8 1l3 3-3 3" fill="none" stroke="#e0e0e0" /></svg>
);

const MainPane = () => (
  <Pane
    top={68}
    height={372}
    grid={[89, 131, 172, 213, 254, 296, 337, 378]}
    ticks={[['3500', 338], ['3000', 379]]}
    legend={mainLegend}
    axis={(
      <WeekBox>
        <WeekDate>20171027</WeekDate>
        {weekInfo.map(([label, value, color]) => (
          <React.Fragment key={label}>
            <WeekLabel>{[...label].map((c) => <span key={c}>{c}</span>)}</WeekLabel>
            <WeekValue $color={color}>{value}</WeekValue>
          </React.Fragment>
        ))}
      </WeekBox>
    )}
    overlay={(at) => (
      <>
        {levels.map(([label, y]) => <LevelTag key={label} style={{ top: at(y) }}>{label}</LevelTag>)}
        <Extreme style={{ top: at(114), left: `${(1149 / 1595) * 100}%` }}>6208<Arrow /></Extreme>
        <Extreme style={{ top: at(374), left: `${(393 / 1595) * 100}%` }}>3061<Arrow /></Extreme>
      </>
    )}
  >
    {profile.map(([x, y]) => <rect key={y} x={x} y={y} width={1645 - x} height="10" fill="#686000" fillOpacity="0.7" />)}
    {levels.map(([label, y, x]) => (
      <g key={label}>
        <rect x="50" y={y} width="1595" height="2" fill="#fff" />
        <rect x={x} y={y} width={1645 - x} height="2" fill="#b4b4ff" />
      </g>
    ))}
    <Candles />
    {priceLines.map(([color, points]) => <Curve key={points} color={color} points={points} />)}
    <Curve color="#2020ff" points="1460,280 1486,261 1528,230" dash="3 2" />
    <Curve color="#fff" width={1.5} points="1253,243 1264,186 1276,227 1306,149 1324,218 1367,133 1374,140 1405,320 1426,265 1445,287 1468,228 1482,264 1517,199 1523,223" />
    <path d="M1175 437L1645 100M1240 437L1645 146M1305 437L1645 192M1353 84L1407 437M1364 84L1418 437" stroke="#fff" strokeWidth="2" />
    {sarDots.map((d) => (
      <circle key={d.x} cx={d.x + 0.5} cy={d.y + 0.5} r="2" fill="none" stroke={d.color} strokeWidth="1.4" shapeRendering="auto" />
    ))}
  </Pane>
);

const ChartSection = () => (
  <ChartArea>
    <ChartHead>
      <ChartName>螺纹2210(010610)&lt;周线&gt;</ChartName>
      <HeadLink href="#overlay">商品叠加</HeadLink>
      <HeadLink href="#period">周期</HeadLink>
      <svg width="51" height="16" viewBox="0 0 51 16" fill="none" stroke="#78b4ff">
        <path d="M.5 1.5h16v13H.5zM16.500 1.500h17v13h-17zM33.500 1.500h16v13h-16z" />
        <path d="M3 8l4-4v2.500h6v3H7V12zM31 8l-4-4v2.500h-6v3h6V12zM36 8h6M43.500 3v10M46 4.500h2M46 7.500h2M46 10.500h2" />
      </svg>
    </ChartHead>
    <Panes>
      <MainPane />
      <Pane
        top={441}
        height={110}
        grid={[465, 507]}
        ticks={[['1800万', 466], ['900万', 508]]}
        legend={[[G, 'VOL(5,10)', 8], [G, 'VOLUME:77723.0000', 6], ['#fff', 'MAVOL1:70961.4000', 6], [YELLOW, 'MAVOL2:316654.4000']]}
      >
        <Bars />
        <Curve color="#fff" points={mavol1} />
        <Curve color={YELLOW} points={mavol2} />
      </Pane>
      <Pane top={552} height={110} grid={[614]} ticks={[['4500', 615]]} legend={[[G, 'WTC(2)', 8], ['#fff', 'WTC:3506.5000']]}>
        <Curve color="#fff" points={wtc} />
      </Pane>
      <Pane top={663} height={110} grid={[694, 770]} ticks={[['12000', 695], ['0', 762]]} legend={[[G, 'VROC(12)', 8], ['#fff', '-99.4822']]}>
        <Curve color="#fff" points={vroc} />
      </Pane>
      <Pane
        top={774}
        height={110}
        bright
        grid={[790, 809, 836, 863, 881]}
        ticks={[['100', 791], ['80', 810], ['50', 837], ['20', 864], ['0', 873]]}
        legend={[[G, 'RSI(12,12,12)', 9], ['#fff', 'RSI1:44.0748', 6], [YELLOW, 'RSI2:44.0748', 6], ['#ff00ff', 'RSI3:44.0748']]}
      >
        <Curve color="#ff20ff" points={rsi} width={1.5} />
        <Curve color="#ff6070" points={rsi} dash="2 4" />
      </Pane>
      <Pane
        top={885}
        height={117}
        active
        grid={[914, 956]}
        ticks={[['800', 915], ['0', 957]]}
        legend={[[G, 'DMA(10,50,10)', 8], ['#fff', 'DDD:555.3000', 6], [YELLOW, 'AMA:606.7760']]}
      >
        <Curve color="#fff" points={dmaWhite} />
        <Curve color={YELLOW} points={dmaYellow} />
      </Pane>
    </Panes>
    <DateAxis>
      <PeriodName>周线</PeriodName>
      <DateTrack>
        {dateMarks.map(([label, span], i) => <DateMark key={i} $span={span}>{label}</DateMark>)}
      </DateTrack>
    </DateAxis>
  </ChartArea>
);

const BookRow = ({ row: [label, price, volume], big }) => (
  <QuoteRow $big={big}>
    <QuoteLabel>{label}</QuoteLabel>
    <Figure $col={2} $color={RED} $big={big}>{price}</Figure>
    <Figure $col="4 / 6" $color={YELLOW} $big={big} $left>{volume}</Figure>
  </QuoteRow>
);

const Quotes = () => (
  <QuotePanel>
    <QuoteHead>
      <QuoteTitle>螺纹2210(rb2210)</QuoteTitle>
      <RestoreButton aria-label="还原">
        <svg width="16" height="14" viewBox="0 0 16 14" fill="none" stroke="#78b4ff">
          <path d="M.5 .5h15v13H.5zM6.500 3.500h6v5h-6zM3.500 6.500h6v4h-6z" />
        </svg>
      </RestoreButton>
    </QuoteHead>
    <StrengthBar>
      <Strength $part={162} $color={RED} />
      <Strength $part={76} $color={GREEN} />
    </StrengthBar>
    <Book>{sells.map((r, i) => <BookRow key={r[0]} row={r} big={i === 4} />)}</Book>
    <Book>{buys.map((r, i) => <BookRow key={r[0]} row={r} big={i === 0} />)}</Book>
    <Book>
      {stats.map(([a, av, ac, b, bv, bc]) => (
        <QuoteRow key={a}>
          <QuoteLabel>{a}</QuoteLabel>
          <Figure $col={2} $color={ac}>{av}</Figure>
          <QuoteLabel $col={4}>{b}</QuoteLabel>
          <Figure $col={5} $color={bc}>{bv}</Figure>
        </QuoteRow>
      ))}
    </Book>
    <TradeTable>
      <colgroup>
        <col width="44" /><col width="64" /><col width="48" /><col width="48" /><col width="36" />
      </colgroup>
      <thead>
        <tr><th>北京</th><th>价格</th><th>√大单</th><th>仓差</th><th>性质</th></tr>
      </thead>
      <tbody>
        {trades.map(([time, price, size, diff, kind, c1, c2], i) => (
          <tr key={i}>
            <TimeCell $minute={time.length > 3}>{time}</TimeCell>
            <TradeCell $color={RED}>{price}</TradeCell>
            <TradeCell $color={c1 === 'r' ? RED : GREEN}>{size}</TradeCell>
            <TradeCell $color={YELLOW}>{diff}</TradeCell>
            <KindCell $color={c2 === 'r' ? RED : GREEN}>{kind}</KindCell>
          </tr>
        ))}
      </tbody>
    </TradeTable>
    <TabStrip>
      <Tab>笔</Tab>
      <TabRest />
    </TabStrip>
  </QuotePanel>
);

const Tools = () => (
  <Toolbar>
    {leftTools.map((name) => <ToolButton key={name} aria-label={name}>{icons[name]}</ToolButton>)}
    <ToolSeparator />
    <ToolButton aria-label="sheet">{icons.sheet}</ToolButton>
    <ToolButton aria-label="bars">{icons.bars}</ToolButton>
    {chips.map(([label, tone]) => (
      <ToolButton key={label} $on={label === '周'}>
        <Chip $tone={tone} $small={label.length > 2}>{label}</Chip>
      </ToolButton>
    ))}
    <ToolSeparator />
    <ToolButton><Chip $tone="red">画</Chip></ToolButton>
  </Toolbar>
);

export default function App() {
  return (
    <Page>
      <GlobalStyle />
      <TitleBar>
        <MenuNav>
          {menus.map((m) => <MenuItem key={m} $hot={m === '特色功能'}>{m}</MenuItem>)}
        </MenuNav>
        <AppTitle>博易大师-一德期货</AppTitle>
        <TitleActions>
          <ActionButton>
            <svg width="12" height="16" viewBox="0 0 12 16"><path d="M8 0L1 8h4l-3 8 9-10H7z" fill="#f8a020" /></svg>
            交易
          </ActionButton>
          <ActionButton>
            <svg width="14" height="14" viewBox="0 0 14 14"><path d="M7 1a6 5 0 1 1-2 10l-2 3V10a6 5 0 0 1 4-9z" fill="#808080" /></svg>
            论坛
          </ActionButton>
          <WindowButton aria-label="最小化">
            <svg width="12" height="12"><path d="M1 9h10" stroke="#fff" strokeWidth="3" /></svg>
          </WindowButton>
          <WindowButton aria-label="最大化">
            <svg width="12" height="12"><path d="M2 2h8v7H2z" fill="none" stroke="#fff" strokeWidth="2" /></svg>
          </WindowButton>
          <WindowButton aria-label="关闭">
            <svg width="12" height="12"><path d="M2 1l8 9M10 1l-8 9" stroke="#fff" strokeWidth="3" /></svg>
          </WindowButton>
          <Watermark>5E天资5etz.com</Watermark>
        </TitleActions>
      </TitleBar>
      <Tools />
      <Workspace>
        <ChartSection />
        <Quotes />
      </Workspace>
      <StatusBar>
        <IndexValue $w={50} $green>3151.05</IndexValue>
        <IndexValue $w={53} $green $right>-42.98</IndexValue>
        <IndexValue $w={61}>3735.73亿</IndexValue>
        <StatusSeparator />
        <IndexValue $w={12}>深</IndexValue>
        <IndexValue $w={58} $green>11392.23</IndexValue>
        <IndexValue $w={52} $green $right>-241.10</IndexValue>
        <IndexValue $w={61}>4471.06亿</IndexValue>
        <StatusSeparator />
        <IndexValue $w={20}>300</IndexValue>
        <IndexValue $w={50} $green>4070.79</IndexValue>
        <IndexValue $w={52} $green $right>-64.11</IndexValue>
        <IndexValue $w={61}>2165.37亿</IndexValue>
        <StatusSeparator />
        <Brand>p<b>o</b>bo</Brand>
        <svg width="21" height="14" viewBox="0 0 21 14">
          <path d="M1 1h9M5.500 1v11M1 1l4.500 6L10 1" fill="none" stroke="#404040" strokeWidth="2" />
          <path d="M10 10h2v2h-2zM13 8h2v4h-2zM16 5h2v7h-2zM19 2h2v10h-2z" fill="#404040" />
        </svg>
        <Clock>15:47</Clock>
      </StatusBar>
      <Taskbar>
        <TaskItem />
        <TaskClock>15:47</TaskClock>
      </Taskbar>
    </Page>
  );
}
